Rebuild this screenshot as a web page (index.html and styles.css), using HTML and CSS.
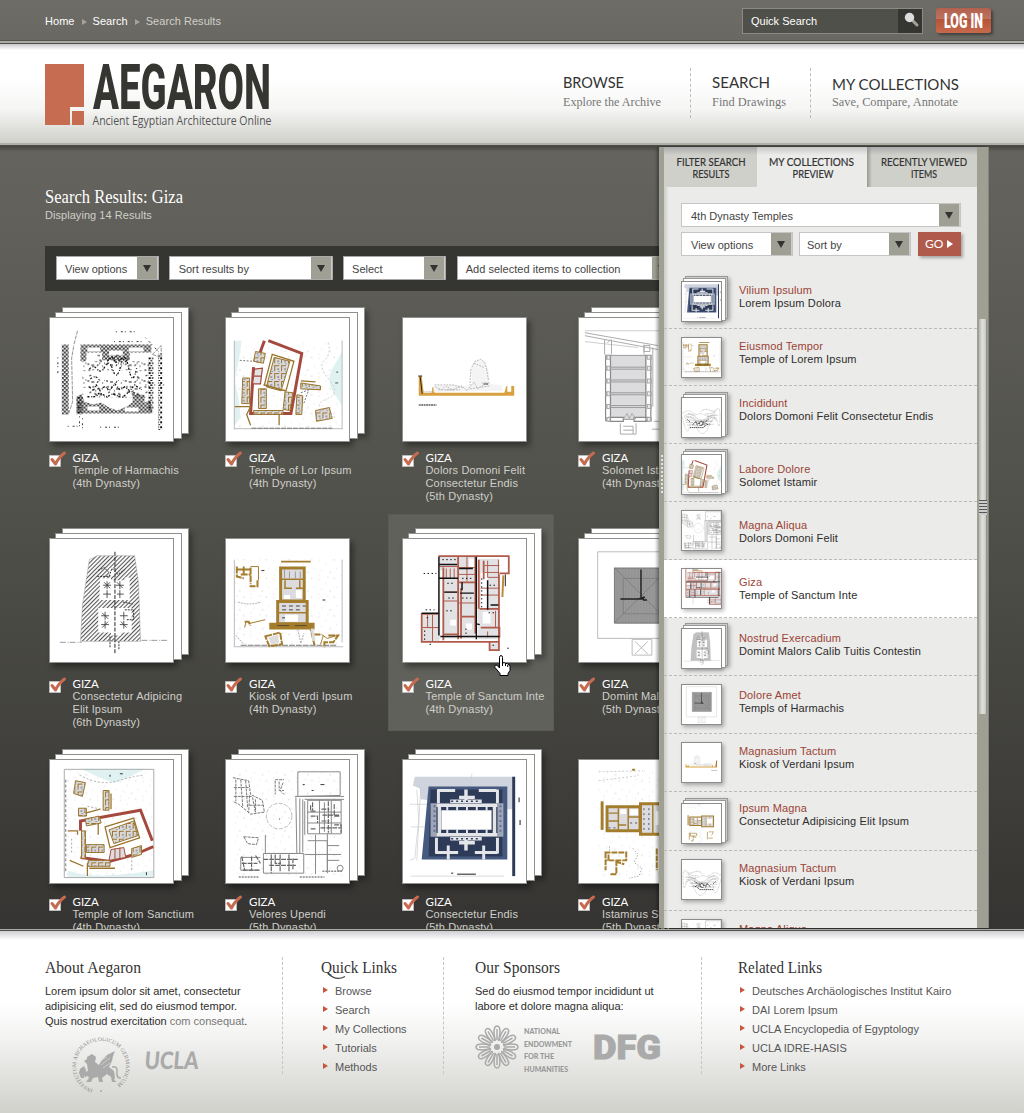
FILE: index.html
```html
<!DOCTYPE html>
<html lang="en">
<head>
<meta charset="utf-8">
<title>Aegaron – Search Results</title>
<link rel="stylesheet" href="styles.css">
</head>
<body>
<svg class="defs" width="0" height="0" aria-hidden="true">
<defs>
<pattern id="hatch" width="3" height="3" patternUnits="userSpaceOnUse" patternTransform="rotate(45)"><rect width="1.1" height="3" fill="#555"/></pattern>
<pattern id="check" width="4" height="4" patternUnits="userSpaceOnUse"><path d="M0 0h2v2h2v2h-2v-2h-2z" fill="#444"/><path d="M1 2v1M3 0v1" stroke="#888"/></pattern>
<pattern id="checkb" width="4" height="5" patternUnits="userSpaceOnUse"><path d="M0 0h2.500v2h-2.500zM2 3h2v1h-2z" fill="#111"/></pattern>
<pattern id="speck" width="19" height="17" patternUnits="userSpaceOnUse"><path d="M1 2h2M6 1v2M10 4h3M16 2v1M2 8l2-1M7 9h2v2M13 8v2h2M17 12h1M4 14h3M10 15l1-2M15 15h1M8 6h1M1 12v2M12 12h1" stroke="#111" fill="none"/></pattern>
<pattern id="dust" width="23" height="19" patternUnits="userSpaceOnUse"><path d="M2 3h1M9 7h1M17 2h2M5 13h1M13 15h2M20 11h1M11 1h1M2 18h1" stroke="#ddd" fill="none"/></pattern>
<pattern id="rooms" width="7" height="8" patternUnits="userSpaceOnUse"><rect width="7" height="8" fill="#d9d9dc"/><path d="M0 .5h5M.5 0v6" stroke="#9a742c"/><path d="M3 4h2M5 6v1" stroke="#666"/></pattern>
<pattern id="grain" width="3" height="3" patternUnits="userSpaceOnUse"><rect width="3" height="3" fill="#999"/><path d="M0 0h1M2 2h1" stroke="#8a8a8a"/></pattern>

<g id="harmachis" fill="none">
<path fill="url(#check)" d="M12 27h7v71h-7zM31 27h72v8H31zM31 27h6v17h-6zM27 80l5-3 3 8 9 3 8-2 8 5 8 3 10-4 8-6 8 3 8-4 2 14H27zM53 34h28v9H53zM84 78h12v11H84z"/>
<path fill="url(#checkb)" d="M100 40h5v55h-5zM110 36h4v78h-4zM27 80h6v18h-6z"/>
<path fill="#fff" d="M38 30h13v4H38zM60 33h14v5H60zM80 30h15v4H80zM38 90h12v4H38zM76 91h14v4H76z"/>
<path fill="url(#speck)" d="M33 44h68v9H33zM38 63h60v18H38zM48 37h34v10H48zM88 52h14v26H88zM33 52h10v26H33z"/>
<path d="M40 52q4-5 8 0t8-3 8 4 8-5 8 3 8 0M58 44l5-4 4 5 6-4 6 5M41 62q5-5 9 1M40 70l4 4 3-6 4 6 5-5 4 5 6-7 5 6 5-3 5 4 5-6 7 5M38 80h9l3-4 8 4 6-3 9 4 9-7 7 4" stroke="#111" stroke-width="1.300" stroke-dasharray="2 2 1 1"/>
<path d="M28 13l-4 15M24 29l-2 12 1 44-4 12M104 37l9-9v12z" stroke="#777" stroke-width=".8" stroke-dasharray="4 1"/>
<path d="M67 14h22M65 24h28M18 110h10M51 111h19M97 68h22M8 40v16M33 102v14M30 100v11M97 20l14 15" stroke="#333" stroke-dasharray="1 4 2 2"/>
</g>

<g id="lor" fill="none">
<path fill="url(#dust)" d="M8 23h110v90H8z"/>
<path fill="#dff2f1" d="M8 23h8l-3 20-4 20 4 20 2 18-7 9zM118 33c-5 12-13 20-13 30s9 18 13 27z"/>
<path d="M8.500 23v90M8 112.500h110M118 23v90" stroke="#bbb"/><path d="M26 112h82" stroke="#777" stroke-dasharray="5 1"/>
<path stroke="#a5493e" stroke-width="3" d="M39 23l-8 22M28 50l-3 47h41l11-61-34-13"/>
<path fill="url(#rooms)" stroke="#9a742c" d="M30 34l10 2-2 10-10-2zM49 40l16 4-9 30-15-4zM17 61h7v26h-8zM33 72h8v20h-8zM60 75l8 1-3 18-7-1zM72 78l6 1-1 19h-6zM91 94l14-3 3 11-16 3zM76 66l20 3v4l-20-1zM28 94h30v4H28z"/>
<path stroke="#9a742c" stroke-width="1.300" d="M47 37l22 7-8 30-22-6zM38 68l22 6M76 64l15 1M9 90h16l-4 8 4 11M54 98v11"/>
<path fill="#e3e3e5" stroke="#a5493e" stroke-width="1.200" d="M29 52l8-1-2 16h-8zM28 59h8"/>
<path d="M14 43l13 1M76 76l8-3-5 14" stroke="#777" stroke-dasharray="2 1.500"/><path d="M104 25q3 12-4 18t5 20-4 20 10 18" stroke="#ccc" stroke-dasharray="2 2"/><path d="M112 55h2M111 66h3" stroke="#555"/>
</g>

<g id="section" fill="none">
<path fill="#d9a040" d="M16 59h3l2 17h8l1-6 2 1v5h71l2-7h1v6h4v-6h3v10H16z"/>
<path d="M15.500 59h4M17.500 60l2 17" stroke="#222"/>
<path fill="#f4f4f5" d="M31 75v-6l8-1 3 2 8-3 12 2 8-1v-9l-1-8 4-7 6-1 4 2 4 8 1 14 12 1 2 6z"/>
<path d="M33 70l6 3 4-4 7 4 10-4 5 5 7-9 4 7 8-6M70 50l3-6 6-2 4 3 2 7M20 75h10M44 73h9M68 72l20-3M80 66h8M69 52l-1 16M85 52l2 12M32 68h18l12 3M36 73h22M72 46l10 4" stroke="#bbb" stroke-dasharray="2 1"/>
<path d="M16 88.500h18M82 67h5" stroke="#888" stroke-width="2" stroke-dasharray="2 .5"/>
</g>

<g id="solomet" fill="none" stroke="#999">
<path stroke="#ccc" d="M6 13h90M6 24l54 6"/><path d="M6 15l74 13M6 18l74 14M26 22v15M33 22v15M66 27v10M75 30v60M29 25l3-3" stroke="#aaa"/>
<path fill="#dcdcde" d="M32 38h36v65H32z"/><path d="M32 50h36M32 52h36M32 63h36M32 65h36M32 76h36M32 78h36M32 89h36M32 91h36" stroke="#999"/>
<path fill="#fff" stroke="#888" stroke-width="1.200" d="M27 38h5v66h-5zM68 38h5v66h-5zM30 101h15v4H30zM56 101h15v4H56z"/>
<path d="M27 40h5M27 51h5M27 64h5M27 77h5M27 90h5M27 103h5M69 40h5M69 51h5M69 64h5M69 77h5M69 90h5M69 103h5" stroke="#aaa" stroke-width="5"/><path d="M29 40h2M29 51h2M29 64h2M29 77h2M29 90h2M29 103h2M70 40h2M70 51h2M70 64h2M70 77h2M70 90h2M70 103h2" stroke="#eee" stroke-width="3"/>
<path d="M45 103l4-6 2 5 3-5 4 6M42 107v11h16v-11M45 110h10v8M45 114h10M76 105h7v8h-9M66 28h6v6h-6z" stroke="#aaa"/>
</g>

<g id="mound" fill="none">
<path fill="url(#hatch)" stroke="#999" stroke-width=".5" d="M40 21l8-4h38l4 28 2 59H31l2-37z"/>
<path fill="#fff" d="M51 40h11v2h14v-3h5v23H50zM49 70h34v25h-11v3H62v-3H49zM60 30h6v7h-6z"/>
<path d="M58 43v8M54 47h8M55 44l6 6M61 44l-6 6M58 52v8M54 56h8M71 43v8M67 47h8M68 44l6 6M71 52v8M68 56h7M56 74v8M52 78h8M53 75l6 6M56 83v8M52 87h8M53 90l6-6M75 74v8M71 78h8M75 83v8M71 87h8M72 84l6 6" stroke="#444" stroke-width=".9"/>
<path d="M66 13v103" stroke="#222" stroke-dasharray="4 1.500"/><path d="M48 38h12l3-8 6 6 7-5M74 64l10 2M76 72h9v10h-8M61 99v11M70 104v8M49 32l6-3 5 5" stroke="#333" stroke-dasharray="2 1"/>
<path d="M10 105h22M93 103h28" stroke="#999" stroke-dasharray="6 2 1 1"/>
</g>

<g id="kiosk" fill="none">
<path fill="url(#dust)" d="M8 20h110v90H8z"/><path d="M8.500 21v89M9 109.500h110M118 21v84" stroke="#bbb"/><path d="M15 108h98" stroke="#777" stroke-dasharray="6 1"/>
<path fill="#dcdce0" stroke="#a37c2c" stroke-width="3" d="M55.500 29.500h24V63h-24zM52.500 63.500h30V86h-30z"/>
<path fill="#a37c2c" d="M44 85h46v7H44zM56 22h30v2H56z"/>
<path stroke="#a37c2c" stroke-width="1.500" d="M56 41h23M59 50h8M71 50h8M60 42v8M75 42v8M52 75h30"/><path stroke="#999" d="M59.500 31v9M64.500 33v7M70.500 33v7M75.500 33v7"/>
<path fill="#fff" d="M59 57h6v4h-6zM71 52h6v8h-6zM60 77h13v7H60z"/><path d="M57 68h4M64 68h4M71 68h4M78 68h3M57 72h4M64 72h4M71 72h4M57 80h3" stroke="#777" stroke-width="1.500"/><path d="M52 88h12M70 88h12" stroke="#333" stroke-width=".7"/>
<path stroke="#a37c2c" stroke-width="2" d="M10 31h15M11 28v10l7 2M15 36h10M18 28v8M25 29v17M32 42v6h-8M19 84h4l2 4M40 99l15-4 2 12-13 2zM85 87l5 21M89 97h8M104 98h10l-5 7h-9v5" stroke-dasharray="7 1"/><path d="M25 28h8v14M20 85l-1 5M23 86l17-4M99 98l-3 9M97 97l6 4 10-3" stroke="#a37c2c"/>
<path fill="#ddd" d="M43 100l10-3 1 9-8 1zM86 91l3 0 2 12-3 1z"/><path d="M10 98l8 9M73 92l3 14 3-10M12 64q12 4 24 0" stroke="#aaa" stroke-dasharray="2 1"/><path d="M36 32h3M98 62h3" stroke="#333"/>
</g>

<g id="sanctum" fill="none">
<path fill="#e2e2e5" d="M37 18h36v83H37zM76 20h22v82H76zM19 77h18v27H19zM88 106h10v7H88z"/>
<path fill="#fff" d="M67 20h6v9h-6zM79 34h7v37h-7zM98 19h10v15H98zM48 82h6v6h-6zM64 86h6v6h-6zM81 74h8v12h-8zM38 32h2v70h-2z"/>
<path stroke="#b05a4a" stroke-width="1.800" d="M36 17.500h71.500V35H98M97.500 36v77H88v-8M98 104.500H19V76h17M41 29v74M56 18v84M59 50v51M73.500 18v78M77 21v50M82 22v19M78 71h20M79 90h19v10M42 97h14M57 44h16M60 79h13"/>
<path stroke="#b05a4a" d="M37 28h19M44 30v10M48 30v10M52 30v10M57 29h16M65 18v25M57 36h16M86 22v17h11V21M83 27h15M83 34h14M86 50h12M79 57h19M41 54h15M41 63h15M57 65h16M25 77v13h11M30 77v27M20 90h8M79 50h7M86 94v6M94 73v17"/>
<path stroke="#111" stroke-width="1.500" d="M36.500 18v80M74.500 18v84M36 40h20M42 54h13M58 55h14M37 26h18M19 75.500h18M86 42v30M57 30h14M38 99h60M60 44v8M89 67h8M74 86l4 1"/>
<path d="M40 21h14M45 45h6M46 60h6M60 40h12M60 60h12M44 73h8M64 91v8M88 47h8M87 75h8M91 108h4M80 40v30M21 35h13M23 72h9M27 107h3M106 111h3M24 80h4M22 93v10" stroke="#111" stroke-dasharray="1.500 2.500"/>
<path d="M102 37l-1 22" stroke="#b98c3d" stroke-width="2"/><path d="M104 36v12" stroke="#222"/>
</g>

<g id="pyramid" fill="none">
<path fill="#fff" stroke="#bbb" d="M19 13h88v88H19z"/><path fill="url(#grain)" stroke="#777" d="M36 29.500h56v56H36z"/>
<path stroke="#777" d="M36 29l56 56M36 85l56-56M45 40h38v36H45z" stroke-width=".7"/><path stroke="#222" stroke-width="1.500" d="M63 31v28M42 61h24M63 56v5M61 61l6-2M65 62h4"/>
<path stroke="#bbb" d="M54 102h20v16H54zM57 104l13 13M70 104l-13 13"/>
</g>

<g id="iom" fill="none">
<path fill="url(#dust)" d="M15 10h90v108H15z"/><path fill="#dff2f1" d="M31 9h66l-20 10-12 4-14-5zM18 112c20 8 50 6 87 0v7H18z"/>
<path stroke="#aaa" d="M14.500 9.500h91v110h-91z"/><path stroke="#777" d="M16 20v95" stroke-dasharray="3 2"/>
<path stroke="#a5493e" stroke-width="3" d="M31 72V62l61-11 12 31M105 88l-14 6M86 96l-25 7-30-4"/>
<path fill="url(#rooms)" stroke="#9a742c" d="M26 21l10 2-3 14-9-3zM54 31h6v20h-6zM29 49h8v8h-8zM36 60l14-3 2 7-15 3zM60 71l25-9 4 15-24 8zM37 86h18v8H37zM32 72h4v28h-4zM83 90l10-3v9l-10 3zM39 102h22v6H38z"/>
<path fill="#ddd" stroke="#a5493e" d="M62 91l13-2 2 10-17 3zM66 90v12M71 89v11"/>
<path stroke="#9a742c" stroke-width="1.300" d="M56 68l29-9 6 20-30 10zM36 54l15-4M62 34v16M38 105v13M18 72h10v4M20 102l14 6M40 110h26M49 64v12"/>
<path stroke="#aaa" d="M38 47l14 3M83 98v16M22 80v15M30 15q20 12 40 6t25-5" stroke-dasharray="2 2"/><path stroke="#333" d="M61 15v2M71 14h3M98 114v3"/>
</g>

<g id="velores" fill="none" stroke="#888">
<path fill="url(#dust)" stroke="none" d="M7 10h113v110H7z"/><circle cx="54" cy="57" r="13" stroke="#bbb" stroke-dasharray="4 1.500"/>
<path d="M73 12h43v24l-43 1zM70 37h50M75 39v56M78 40v54M80 40h40M80 42v34M83 41h34v34H83zM71 38l1 57M38 95h41v20H38zM35 99h-20v13h19M40 76v19h30M95 41v34M107 41v34M83 53h34M83 64h34M100 43v30M83 82h20v30M91 76v40M103 75v40M80 96h37M103 87h12M103 102h12"/>
<path stroke="#666" d="M38 101h35M46 96v19M55 96v18M64 96v18M44 107h27M86 46v6h6M86 57h7v7M86 70h6M97 50h8M97 62h8M110 45v12h5M110 66h7v8M16 98l3 14M26 98v14M16 105h16M17 112h17M30 97l5 8M88 43v8M98 56h18M104 42v32M96 69h20M50 96v9h6M68 100v12" stroke-width="1.200" stroke-dasharray="5 1"/>
<path d="M7 18l16 3 2 14 12 6 2 12-14 2-12-10-6-3M10 20v22M15 20l2 27M20 21l2 28M8 28h16M8 37h18M27 38l3 16M24 36l-1 18M30 40v13M24 46h14M50 20h9M50 21v14M54 22v9h5M58 23l-3 8 4 4M18 78l15 1-2 7-9-1z" stroke="#777" stroke-dasharray="3 1"/>
<path d="M13 119h20M75 119h25M98 113h20" stroke-width="1.500" stroke-dasharray="2 1"/><path d="M78 25h2M96 25h4M87 31h2M54 60h1" stroke="#333"/><circle cx="116" cy="110" r="3"/>
</g>

<g id="blueplan" fill="none">
<path fill="#ced3de" d="M12 17h100v33h-7L18 40l-1-11-7-3z"/><path stroke="#ccc" stroke-width=".7" d="M14 30l2 30-4 40-5 2M18 28l-4 74M7 45h20M8 68h14M70 14l-2 20M8 118h95"/>
<path fill="#46597f" d="M26 27h80v74H19z"/><path fill="#2d3b58" d="M28 30h73v68H26z"/><path fill="#b9c0d0" d="M28 44h74v34H28z" opacity=".8"/>
<path fill="#2d3b58" d="M34 44h62v34H34z"/>
<g stroke="#e3e5e8" stroke-width="4"><path d="M37 47v28M93 47v28M34 46h62M34 76h62M48 42h32M57 38h16M64 30v12M48 80h32M57 84h16M64 80v12" stroke-width="3.500"/><path d="M35 31h18M77 31h18M36 30v14M96 30v14M34 79v16M96 79v16M33 94h23M73 94h23M46 87v14M82 87v14" stroke-width="3"/></g>
<path fill="#fff" d="M39 51h51v20H39z"/><path stroke="#e3e5e8" stroke-width="5" stroke-dasharray="2 8" d="M44 49h44M44 73h44"/>
<path stroke="#2d3b58" stroke-width="1.500" d="M49 42h30M49 80h30" stroke-dasharray="2 3"/><path stroke="#657391" stroke-width="2" d="M32 46v30M99 46v30" stroke-dasharray="2 3"/>
<path stroke="#2d3b58" stroke-width="3" d="M112.500 17v101"/><path stroke="#666" stroke-width="1.500" d="M118 38v5M119 61v5M55 116h19M49 115h2"/>
</g>

<g id="istamirus" fill="none">
<path fill="url(#dust)" d="M20 10h90v110H20z"/><path fill="#a37c2c" d="M22 42h3v29h-3z"/>
<path fill="#dcdce0" stroke="#a37c2c" stroke-width="3" d="M28.500 47.500H62V72H28.500zM62.500 44.500h34v31h-34z"/>
<path stroke="#a37c2c" stroke-width="1.500" d="M40 49v22M50 49v22M30 54h10M30 62h10M50 58h11M40 66h8M75 46v29M86 46v29"/><path fill="#fff" d="M42 50h6v5h-6zM52 50h8v6h-8zM78 52h15v14H78z"/><path stroke="#555" d="M66 49v24M71 49v24M30 69h9M52 64h7" stroke-dasharray="2 3"/>
<path stroke="#a37c2c" stroke-width="2" d="M26 94h22v8h-20M27 94v18M38 102v14h-7M37 103l9 3M30 96v6M79 90v22M54 10h3M84 90h12l-5 10M82 108h12" stroke-dasharray="6 1"/><path stroke="#888" d="M55 90l5 6-4 8 8 6-3 8-10 2M31 88v6" stroke-dasharray="1 2"/><path d="M20 12l45-1M20 21l40-5" stroke="#ccc" stroke-dasharray="2 2"/>
</g>

<g id="relief" fill="none" stroke="#888" stroke-width="1.500">
<path d="M8 50q10-14 25-4t20 6 22 4 30-14 12 20-8 14-25 12-36 6-22-4-18-15 0-25" stroke-dasharray="2 2"/><path d="M12 56q18-8 34 6t30 2 34-8M14 66q14-10 28 4t36 0 30 2M16 76q18 3 30-2t48 0M20 84q20 0 44 2l34-4M60 45q10-12 25-5t20-2M10 61q20-6 34 6t30 1 34-5M15 71q16-4 30 1t52 0M22 50q16 2 22 8M74 50q14 4 28-6M78 58q12 2 28-4" stroke-dasharray="3 1.500"/>
<path stroke="#222" stroke-width="2.500" d="M28 92h40l8-8 10-3M35 85l8-10 8 6 10-8 8 6 14-12M46 76l5 12M62 84l18-5M20 68l8 7M55 78l4 10M68 74l-6 12" stroke-dasharray="4 2"/>
</g>

<g id="tick"><path fill="#fff" stroke="#bbb" d="M.5 4.500h11v11H.5z"/><path fill="none" stroke="#c66b50" stroke-width="3" stroke-linecap="round" stroke-linejoin="round" d="M3 8.500l3.500 4.500Q10 6 15.500 2"/></g>
</defs>
</svg>

<div class="topbar">
  <nav class="crumbs"><a>Home</a><i></i><a>Search</a><i></i><span>Search Results</span></nav>
  <div class="quick"><span>Quick Search</span><b><svg width="24" height="23"><path d="M14 11l5 5" stroke="#a3a399" stroke-width="3" stroke-linecap="round"/><circle cx="11.500" cy="8.500" r="4.700" fill="#ddd"/></svg></b></div>
  <button class="login"><svg width="55" height="25"><text x="8" y="19.500" textLength="39" lengthAdjust="spacingAndGlyphs">LOG IN</text></svg></button>
</div>

<header class="header">
  <svg class="logo" width="230" height="70">
    <path fill="#c66c50" d="M0 2h39v43H25v18H0zM27 49h12v14H27z"/>
    <text class="word" x="48" y="46.500" textLength="178" lengthAdjust="spacingAndGlyphs">AEGARON</text>
    <text class="tagline" x="47.500" y="63" textLength="179" lengthAdjust="spacingAndGlyphs">Ancient Egyptian Architecture Online</text>
  </svg>
  <nav class="mainnav">
    <svg class="n1" width="100" height="50"><text class="nt" x="0" y="20" textLength="61" lengthAdjust="spacingAndGlyphs">BROWSE</text><text class="ns" x="0" y="38" textLength="98" lengthAdjust="spacingAndGlyphs">Explore the Archive</text></svg>
    <svg class="n2" width="76" height="50"><text class="nt" x="0" y="20" textLength="58" lengthAdjust="spacingAndGlyphs">SEARCH</text><text class="ns" x="0" y="38" textLength="74" lengthAdjust="spacingAndGlyphs">Find Drawings</text></svg>
    <svg class="n3" width="130" height="50"><text class="nt" x="0" y="22" textLength="127" lengthAdjust="spacingAndGlyphs">MY COLLECTIONS</text><text class="ns" x="0" y="38" textLength="126" lengthAdjust="spacingAndGlyphs">Save, Compare, Annotate</text></svg>
  </nav>
</header>

<main class="main">
  <svg class="title" width="200" height="24"><text x="0" y="16" textLength="138" lengthAdjust="spacingAndGlyphs">Search Results: Giza</text></svg>
  <p class="count">Displaying 14 Results</p>
  <div class="toolbar">
    <div class="select s1">View options<b></b></div><div class="select s2">Sort results by<b></b></div><div class="select s3">Select<b></b></div><div class="select s4">Add selected items to collection<b></b></div>
  </div>
  <div class="grid">
    <article class="cell r1"><div class="stack"><svg class="sheet" viewBox="0 0 125 125"><use href="#harmachis"/></svg></div><div class="cap"><svg class="chk" width="19" height="17"><use href="#tick"/></svg><p><strong>GIZA</strong>Temple of Harmachis<br>(4th Dynasty)</p></div></article>
    <article class="cell r1"><div class="stack"><svg class="sheet" viewBox="0 0 125 125"><use href="#lor"/></svg></div><div class="cap"><svg class="chk" width="19" height="17"><use href="#tick"/></svg><p><strong>GIZA</strong>Temple of Lor Ipsum<br>(4th Dynasty)</p></div></article>
    <article class="cell r1"><div class="single"><svg class="sheet" viewBox="0 0 125 125"><use href="#section"/></svg></div><div class="cap"><svg class="chk" width="19" height="17"><use href="#tick"/></svg><p><strong>GIZA</strong>Dolors Domoni Felit<br>Consectetur Endis<br>(5th Dynasty)</p></div></article>
    <article class="cell r1"><div class="stack"><svg class="sheet" viewBox="0 0 125 125"><use href="#solomet"/></svg></div><div class="cap"><svg class="chk" width="19" height="17"><use href="#tick"/></svg><p><strong>GIZA</strong>Solomet Istamir<br>(4th Dynasty)</p></div></article>
    <article class="cell r2"><div class="stack"><svg class="sheet" viewBox="0 0 125 125"><use href="#mound"/></svg></div><div class="cap"><svg class="chk" width="19" height="17"><use href="#tick"/></svg><p><strong>GIZA</strong>Consectetur Adipicing<br>Elit Ipsum<br>(6th Dynasty)</p></div></article>
    <article class="cell r2"><div class="single"><svg class="sheet" viewBox="0 0 125 125"><use href="#kiosk"/></svg></div><div class="cap"><svg class="chk" width="19" height="17"><use href="#tick"/></svg><p><strong>GIZA</strong>Kiosk of Verdi Ipsum<br>(4th Dynasty)</p></div></article>
    <article class="cell r2 hover"><div class="stack"><svg class="sheet" viewBox="0 0 125 125"><use href="#sanctum"/></svg></div><div class="cap"><svg class="chk" width="19" height="17"><use href="#tick"/></svg><p><strong>GIZA</strong>Temple of Sanctum Inte<br>(4th Dynasty)</p></div>
      <svg class="cursor" width="17" height="22"><path fill="#fff" stroke="#000" d="M5.500 12V2.500q0-2 1.500-2t1.500 2V8q2-1 3 .5 2-.5 2.500 1 2-.3 2 2v4l-2 3v2h-8v-2l-5-6q-1-2.500 1-2.500 1.500 0 3.500 3zM8.500 8v3M11.500 8.500V11M13.700 10v2"/></svg></article>
    <article class="cell r2"><div class="stack"><svg class="sheet" viewBox="0 0 125 125"><use href="#pyramid"/></svg></div><div class="cap"><svg class="chk" width="19" height="17"><use href="#tick"/></svg><p><strong>GIZA</strong>Domint Malors<br>(5th Dynasty)</p></div></article>
    <article class="cell r3"><div class="stack"><svg class="sheet" viewBox="0 0 125 125"><use href="#iom"/></svg></div><div class="cap"><svg class="chk" width="19" height="17"><use href="#tick"/></svg><p><strong>GIZA</strong>Temple of Iom Sanctium<br>(4th Dynasty)</p></div></article>
    <article class="cell r3"><div class="stack"><svg class="sheet" viewBox="0 0 125 125"><use href="#velores"/></svg></div><div class="cap"><svg class="chk" width="19" height="17"><use href="#tick"/></svg><p><strong>GIZA</strong>Velores Upendi<br>(5th Dynasty)</p></div></article>
    <article class="cell r3"><div class="stack"><svg class="sheet" viewBox="0 0 125 125"><use href="#blueplan"/></svg></div><div class="cap"><svg class="chk" width="19" height="17"><use href="#tick"/></svg><p><strong>GIZA</strong>Consectetur Endis<br>(5th Dynasty)</p></div></article>
    <article class="cell r3"><div class="single"><svg class="sheet" viewBox="0 0 125 125"><use href="#istamirus"/></svg></div><div class="cap"><svg class="chk" width="19" height="17"><use href="#tick"/></svg><p><strong>GIZA</strong>Istamirus Sit<br>(5th Dynasty)</p></div></article>
  </div>

  <aside class="panel">
    <div class="grip"></div>
    <div class="body">
      <div class="tabs">
        <svg class="tab" width="93" height="41"><text x="12.500" y="19" textLength="69" lengthAdjust="spacingAndGlyphs">FILTER SEARCH</text><text x="28.500" y="31" textLength="37" lengthAdjust="spacingAndGlyphs">RESULTS</text></svg>
        <svg class="tab on" width="110" height="41"><text x="12" y="19" textLength="85" lengthAdjust="spacingAndGlyphs">MY COLLECTIONS</text><text x="35.500" y="31" textLength="41" lengthAdjust="spacingAndGlyphs">PREVIEW</text></svg>
        <svg class="tab last" width="110" height="41"><text x="14" y="19" textLength="86" lengthAdjust="spacingAndGlyphs">RECENTLY VIEWED</text><text x="44" y="31" textLength="26" lengthAdjust="spacingAndGlyphs">ITEMS</text></svg>
      </div>
      <div class="filters">
        <div class="select light wide">4th Dynasty Temples<b></b></div>
        <div class="line"><div class="select light f1">View options<b></b></div><div class="select light f2">Sort by<b></b></div><div class="go">GO<i></i></div></div>
      </div>
      <ul class="items">
        <li><div class="mini multi"><svg viewBox="4 12 116 112"><use href="#blueplan"/></svg></div><p><a>Vilium Ipsulum</a>Lorem Ipsum Dolora</p></li>
        <li><div class="mini"><svg viewBox="6 10 114 114"><use href="#kiosk"/></svg></div><p><a>Eiusmod Tempor</a>Temple of Lorem Ipsum</p></li>
        <li><div class="mini multi"><svg viewBox="4 4 116 116"><use href="#relief"/></svg></div><p><a>Incididunt</a>Dolors Domoni Felit Consectetur Endis</p></li>
        <li><div class="mini multi"><svg viewBox="8 8 108 108"><use href="#lor"/></svg></div><p><a>Labore Dolore</a>Solomet Istamir</p></li>
        <li><div class="mini"><svg viewBox="8 10 108 108"><use href="#velores"/></svg></div><p><a>Magna Aliqua</a>Dolors Domoni Felit</p></li>
        <li><div class="mini"><svg viewBox="8 14 96 96"><use href="#sanctum" transform="rotate(-90 60 60)"/></svg></div><p><a>Giza</a>Temple of Sanctum Inte</p></li>
        <li><div class="mini multi"><svg viewBox="4 6 120 120"><use href="#mound"/></svg></div><p><a>Nostrud Exercadium</a>Domint Malors Calib Tuitis Contestin</p></li>
        <li><div class="mini"><svg viewBox="6 8 114 114"><use href="#pyramid"/></svg></div><p><a>Dolore Amet</a>Templs of Harmachis</p></li>
        <li><div class="mini"><svg viewBox="4 4 120 120"><use href="#section" transform="matrix(-1 0 0 1 128 0)"/></svg></div><p><a>Magnasium Tactum</a>Kiosk of Verdani Ipsum</p></li>
        <li><div class="mini multi"><svg viewBox="8 10 108 112"><use href="#istamirus"/></svg></div><p><a>Ipsum Magna</a>Consectetur Adipisicing Elit Ipsum</p></li>
        <li><div class="mini"><svg viewBox="4 4 116 116"><use href="#relief" transform="matrix(-1 0 0 1 124 0)"/></svg></div><p><a>Magnasium Tactum</a>Kiosk of Verdani Ipsum</p></li>
        <li><div class="mini"><svg viewBox="8 10 108 108"><use href="#velores"/></svg></div><p><a>Magna Aliqua</a>Dolors Domoni Felit</p></li>
      </ul>
    </div>
    <div class="track"><div class="thumb"><span></span></div></div>
  </aside>
</main>

<footer class="footer">
  <section class="c1">
    <svg class="h" width="200" height="22"><text y="16" textLength="96" lengthAdjust="spacingAndGlyphs">About Aegaron</text></svg>
    <p>Lorem ipsum dolor sit amet, consectetur<br>adipisicing elit, sed do eiusmod tempor.<br>Quis nostrud exercitation <a>com consequat</a>.</p>
    <div class="logos">
      <svg class="dai" width="58" height="58" viewBox="0 0 58 58"><defs><path id="ring" d="M21 52.500A25 25 0 1 1 37 52.500"/></defs>
        <text><textPath href="#ring" textLength="131">INSTITUTUM ARCHAEOLOGICUM GERMANICUM</textPath></text><circle cx="29" cy="54" r="1"/>
        <path d="M15 20l5-3 4 3-1 5 4 3 3-5 5-5 8-4-2 5-1 5-3 6 5 4 1 7-1 2 3 2h-5l-1-5-4-3-5 4 1 4h-4l-1-5-5 1-2 4h-5l3-4-1-2-3 1-1-5 4-1-1-7-3-3 3-2z"/><path d="M8 32l4-3 2 4-2 8H9l-2-5z"/><path d="M40 30q6-1 5 5t4 6" fill="none" stroke="#aaa" stroke-width="1.500"/><path d="M27 25l8-5M29 28l9-7M31 31l7-5" stroke="#ddd" stroke-width=".7"/></svg>
      <svg class="ucla" width="58" height="22"><text transform="skewX(-5)" x="1.500" y="18" textLength="54" lengthAdjust="spacingAndGlyphs">UCLA</text></svg>
    </div>
  </section>
  <section class="c2">
    <svg class="h" width="90" height="22"><text y="16" textLength="76" lengthAdjust="spacingAndGlyphs">Quick Links</text><path d="M7 16.500q8 8 17 3" fill="none" stroke="#444" stroke-width="1.200"/></svg>
    <ul><li>Browse</li><li>Search</li><li>My Collections</li><li>Tutorials</li><li>Methods</li></ul>
  </section>
  <section class="c3">
    <svg class="h" width="120" height="22"><text y="16" textLength="85" lengthAdjust="spacingAndGlyphs">Our Sponsors</text></svg>
    <p>Sed do eiusmod tempor incididunt ut<br>labore et dolore magna aliqua:</p>
    <svg class="spons" width="190" height="46"><defs><g id="petal"><path d="M0-7v-11M-1.500-6q-2.300-8-1-13 .8-2 2.500-2t2.500 2q1.300 5-1 13" fill="none" stroke="#aaa" stroke-width="1.500"/></g></defs>
      <g transform="translate(22 23)"><circle r="3" fill="#aaa"/><use href="#petal"/><use href="#petal" transform="rotate(30)"/><use href="#petal" transform="rotate(60)"/><use href="#petal" transform="rotate(90)"/><use href="#petal" transform="rotate(120)"/><use href="#petal" transform="rotate(150)"/><use href="#petal" transform="rotate(180)"/><use href="#petal" transform="rotate(210)"/><use href="#petal" transform="rotate(240)"/><use href="#petal" transform="rotate(270)"/><use href="#petal" transform="rotate(300)"/><use href="#petal" transform="rotate(330)"/></g>
      <g class="neh"><text x="49" y="10" textLength="36" lengthAdjust="spacingAndGlyphs">NATIONAL</text><text x="49" y="22.500" textLength="48" lengthAdjust="spacingAndGlyphs">ENDOWMENT</text><text x="49" y="35" textLength="30" lengthAdjust="spacingAndGlyphs">FOR THE</text><text x="49" y="47.500" textLength="44" lengthAdjust="spacingAndGlyphs">HUMANITIES</text></g>
      <g transform="translate(118 11)" fill="#aaa"><text class="dfg" x="0" y="24" textLength="68" lengthAdjust="spacingAndGlyphs">DFG</text></g>
    </svg>
  </section>
  <section class="c4">
    <svg class="h" width="120" height="22"><text y="16" textLength="84" lengthAdjust="spacingAndGlyphs">Related Links</text></svg>
    <ul><li>Deutsches Archäologisches Institut Kairo</li><li>DAI Lorem Ipsum</li><li>UCLA Encyclopedia of Egyptology</li><li>UCLA IDRE-HASIS</li><li>More Links</li></ul>
  </section>
</footer>
</body>
</html>
```
FILE: styles.css
```css
* { box-sizing: border-box; }
body { margin: 0; width: 1024px; height: 1113px; overflow: hidden; font: 11px/13px "Liberation Sans", Arial, sans-serif; color: #333; background: #d0d1cb; }
p, ul { margin: 0; padding: 0; list-style: none; }
svg { display: block; overflow: visible; flex: none; }
.defs { position: absolute; }

.topbar { height: 44px; padding: 8px 33px 0 45px; display: flex; background: linear-gradient(#6d6c66, #696862); border-bottom: 1px solid #50504a; box-shadow: inset 0 -1px #aaaaa2, inset 0 -2px #aaaaa2, inset 0 -3px #55554f; }
.crumbs { flex: 1; display: flex; align-items: flex-start; padding-top: 7px; color: #d0d0ca; letter-spacing: .05px; }
.crumbs a { color: #fff; }
.crumbs i { border: 3px solid transparent; border-left: 5px solid #a3a39b; border-right: 0; margin: 4px 6px 0 7px; }
.quick { width: 181px; height: 26px; border: 1px solid #8b8b84; background: #50504a; color: #fff; display: flex; line-height: 24px; padding-left: 8px; }
.quick span { flex: 1; }
.quick b { width: 24px; background: #353532; }
.login { width: 55px; height: 25px; margin-left: 13px; padding: 0; border: 0; border-radius: 3px; background: linear-gradient(#b2604e, #bc7460 45%, #b45439 46%, #c7694c); box-shadow: 2px 2px 3px rgba(0,0,0,.4); }
.login text { font: 900 20.500px Roboto, sans-serif; fill: #fff; }

.header { height: 102px; display: flex; padding: 18px 0 0 45px; background: linear-gradient(#c8c7cb, rgba(255,255,255,0) 6px), linear-gradient(#fff 35%, #f5f5f4 65%, #d0d1cb 97%); border-bottom: 1px solid #4d4d48; box-shadow: inset 0 -2px #b0b0a8; }
.word { font: 800 63.500px Roboto, sans-serif; fill: #353532; }
.tagline { font: 12.500px "Open Sans", sans-serif; fill: #555; }
.mainnav { display: flex; margin: 6px 0 0 288px; }
.mainnav .n2, .mainnav .n3 { border-left: 1px dashed #bbb; padding-left: 21px; box-sizing: content-box; }
.mainnav .n1 { width: 127px; }
.mainnav .n2 { width: 98px; }
.nt { font: 15.500px Lato, sans-serif; fill: #333; }
.ns { font: 13px "Liberation Serif", serif; fill: #777; }

.main { position: relative; height: 783px; overflow: hidden; padding: 41px 0 0 45px; background: linear-gradient(rgba(50,50,45,.6), rgba(50,50,45,0) 6px), linear-gradient(#65645f, #4f4f49 50%, #353432); }
.title text { font: 18.500px "Liberation Serif", serif; fill: #fff; }
.title { height: 21px; }
.count { color: #cfcfc9; padding-top: 1px; letter-spacing: .05px; }
.toolbar { margin-top: 24px; height: 45px; width: 640px; background: #353532; padding: 10px 11px; display: flex; }
.select { position: relative; height: 24px; border: 1px solid #aaa; background: #fff; color: #444; line-height: 24px; padding-left: 9px; white-space: nowrap; }
.select b { position: absolute; top: 0; right: 0; width: 21px; height: 22px; background: #9f9f94; box-shadow: inset -1px 0 #ccc; }
.select b::after { content: ""; position: absolute; left: 6px; top: 8px; border: 4px solid transparent; border-top: 7px solid #333; border-bottom: 0; }
.s1 { width: 103px; margin-right: 10px; padding-left: 8px; } .s2 { width: 165px; margin-right: 10px; padding-left: 9px; } .s3 { width: 103px; margin-right: 11px; padding-left: 8px; } .s4 { width: 218px; padding-left: 8px; letter-spacing: .02px; }

.grid { display: grid; grid-template-columns: repeat(4, 166px); column-gap: 10.500px; row-gap: 4px; grid-auto-rows: 217px; margin: 2px 0 0 -10.500px; width: 700px; }
.cell { position: relative; padding: 24px 0 0 14px; }
.hover { background: #61615c; outline: 1px solid #5b5b56; outline-offset: -1px; }
.stack, .single { position: relative; width: 125px; height: 125px; box-shadow: 3px 4px 6px rgba(0,0,0,.4); }
.stack::before, .stack::after { content: ""; position: absolute; width: 125px; height: 125px; background: #fff; border: 1px solid #8f8f8c; box-shadow: 3px 4px 6px rgba(0,0,0,.35); }
.stack::before { left: 13px; top: -10px; }
.stack::after { left: 6px; top: -5px; box-shadow: none; }
.sheet { position: relative; z-index: 1; width: 125px; height: 125px; background: #fff; border: 1px solid #8f8f8c; overflow: hidden; }
.cap { display: flex; color: #cfcfc9; padding-top: 9px; white-space: nowrap; letter-spacing: .16px; }
.cap p { position: relative; }
.chk { width: 19px; margin: 0 5px 0 0; }
.cap strong { display: block; font: 11.500px/13px Lato, sans-serif; letter-spacing: 0; color: #fff; }
.r2 .cap { padding-top: 14px; } .r3 .cap { padding-top: 11px; }
.cursor { position: absolute; left: 106px; top: 141px; z-index: 2; }

.panel { position: absolute; z-index: 5; left: 659px; top: 1px; width: 330px; height: 781px; display: flex; overflow: hidden; box-shadow: -2px 0 3px rgba(0,0,0,.35); }
.grip { width: 5px; background: #9f9f94; }
.grip::after { content: ""; display: block; width: 2px; height: 38px; margin: 308px 0 0 2px; background: repeating-linear-gradient(#e5e5e0 0 2px, transparent 2px 4px); }
.body { width: 313px; background: linear-gradient(90deg, #ccccc8, #ebebea 5px); }
.tabs { display: flex; height: 40px; background: #cfd0ca; }
.tab text { font: 10.500px Lato, sans-serif; fill: #333; stroke: #333; stroke-width: .2; }
.tab { height: 40px; background: linear-gradient(#aaa, rgba(207,208,202,0) 8px); }
.tab.on { background: linear-gradient(#c6c6c4, #ebebea 8px); }
.tab.last { background: linear-gradient(90deg, #999992, rgba(207,208,202,0) 5px), linear-gradient(#aaa, rgba(207,208,202,0) 8px); }
.filters { padding: 16px 0 0 17px; height: 84px; }
.light { border-color: #c5c5c5; border-width: 1px; }
.wide { width: 280px; margin-bottom: 5px; }
.line { display: flex; }
.f1 { width: 112px; margin-right: 6px; } .f2 { width: 112px; margin-right: 7px; padding-left: 7px; }
.go { width: 43px; height: 24px; background: #b05a4c; box-shadow: 2px 2px 3px rgba(0,0,0,.3); color: #fff; font: 12px/24px Lato, sans-serif; padding-left: 7px; display: flex; align-items: center; }
.go i { border: 4px solid transparent; border-left: 6px solid #fff; border-right: 0; margin-left: 4px; }
.items li { --h: 58px; --i: 8px; --t: 17px; height: var(--h); display: flex; padding-left: 17px; border-bottom: 1px dashed #bbb; }
.items li:nth-child(1) { --i: 10px; --t: 13px; }
.items li:nth-child(2) { --h: 57px; --t: 11px; }
.items li:nth-child(3) { --i: 11px; --t: 11px; }
.items li:nth-child(4) { --i: 10px; --t: 19px; }
.items li:nth-child(5) { --t: 17px; }
.items li:nth-child(6) { --t: 16px; background: #fff; }
.items li:nth-child(7) { --i: 10px; --t: 14px; }
.items li:nth-child(8) { --t: 13px; }
.items li:nth-child(9) { --t: 11px; }
.items li:nth-child(10) { --h: 59px; --i: 11px; --t: 10px; }
.items li:nth-child(11) { --h: 60px; --t: 11px; }
.items li:nth-child(12) { --t: 12px; }
.items p { padding-top: var(--t); margin-left: 17px; white-space: nowrap; color: #2d2d2b; letter-spacing: .13px; }
.items a { display: block; color: #9b4335; }
.mini { position: relative; width: 41px; height: 41px; margin-top: var(--i); box-shadow: 2px 2px 4px rgba(0,0,0,.3); }
.mini svg { position: relative; z-index: 1; width: 41px; height: 41px; background: #fff; border: 1px solid #8c8c8c; overflow: hidden; }
.multi::before, .multi::after { content: ""; position: absolute; width: 41px; height: 41px; border: 1px solid #999; background: #fff; }
.multi::before { left: 4px; top: -5px; background: #ccc; box-shadow: 2px 2px 4px rgba(0,0,0,.3); }
.multi::after { left: 2px; top: -3px; }
.track { width: 12px; background: #9f9f94; border-right: 1px solid #86867e; padding: 172px 0 0 2px; }
.thumb { width: 8px; height: 395px; background: linear-gradient(90deg, #b5b5ae, #e0e0dc 40%, #d0d0cb 80%, #77776f); padding-top: 181px; }
.thumb span { display: block; width: 8px; height: 15px; background: repeating-linear-gradient(#555 0 1px, #ccc 1px 3px); }

.footer { height: 184px; padding: 30px 0 0 45px; display: flex; line-height: 15px; background: linear-gradient(#aaaaa2 1px, #50504a 1px, #50504a 2px, rgba(255,255,255,0) 2px), linear-gradient(#c4c3c8, rgba(255,255,255,0) 11px), linear-gradient(#fff 40%, #f2f2f1 60%, #d0d1cb); }
.footer section { height: 117px; margin-top: -2px; border-right: 1px dashed #c5c5c2; }
.footer .c1 { width: 238px; } .footer .c2 { width: 161px; padding-left: 38px; } .footer .c3 { width: 258px; padding-left: 31px; } .footer .c4 { padding-left: 36px; border: 0; }
.footer .h { height: 27px; }
.h text { font: 17px "Liberation Serif", serif; fill: #333; }
.footer p { color: #2d2d2b; white-space: nowrap; }
.footer p a { color: #777; }
.footer li { height: 19px; color: #555; padding-left: 14px; position: relative; white-space: nowrap; }
.footer li::before { content: ""; position: absolute; left: 2px; top: 3px; border: 3px solid transparent; border-left: 5px solid #c4573d; border-right: 0; }
.logos { display: flex; margin: 8px 0 0 27px; }
.dai { fill: #aaa; } .dai text { font: 5.500px "Liberation Serif", serif; fill: #888; }
.ucla { margin: 14px 0 0 14px; }
.ucla text { font: 900 24px Lato, sans-serif; fill: #aaa; }
.spons { margin-top: 10px; }
.neh text { font: 900 7px Lato, sans-serif; fill: #999; }
.dfg { font: 900 34px Roboto, sans-serif; fill: #aaa; stroke: #aaa; stroke-width: 1; }
```
